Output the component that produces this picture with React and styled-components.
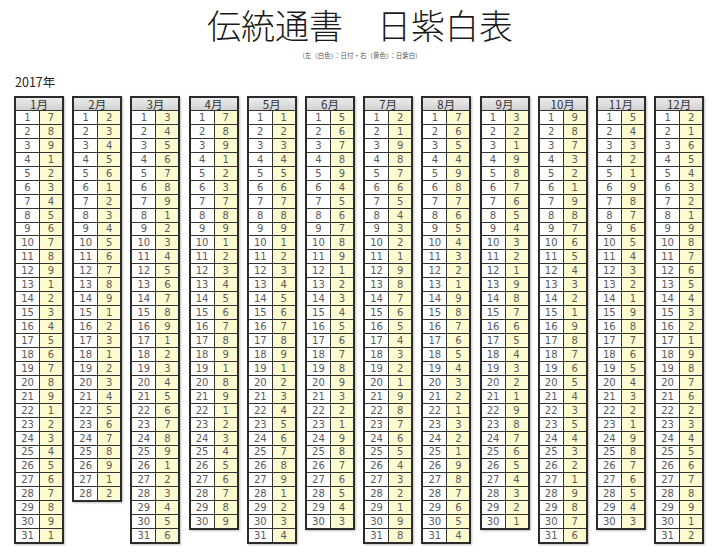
import styled, { createGlobalStyle } from "styled-components";

// 日紫白 (one digit per day), read from the 2017 sheet
const STARS = [
  "7891234567891234567891234567891",
  "2345612345678912312345678912",
  "3456789123456789123456789123456",
  "789123789123456789189123456789",
  "1234567891234567891234567891234",
  "567894567891234567893219876543",
  "2198765432198765432198765432198",
  "7654987654321987654321321987654",
  "321987654321987654321987654321",
  "9873219876543219876543543219876",
  "543219876543219876543219876543",
  "2165432198765432198762345678912",
];

const GlobalStyle = createGlobalStyle`
  body {
    margin: 0;
    background: #ffffff;
    font-family: "DejaVu Sans", Verdana, "Noto Sans CJK JP", sans-serif;
  }
`;

const Page = styled.div`
  width: 720px;
  height: 557px;
  overflow: hidden;
  display: flex;
  flex-direction: column;
`;

const Title = styled.h1`
  margin: 7px 0 0;
  text-align: center;
  font-family: "Noto Sans CJK JP", sans-serif;
  font-weight: 300;
  font-size: 34px;
  line-height: 36px;
  color: #1a1a1a;
`;

const Note = styled.div`
  text-align: center;
  font-family: "Noto Sans CJK JP", sans-serif;
  font-size: 6.5px;
  line-height: 9px;
  color: #555;
  margin-top: 8px;
`;

const YearLabel = styled.div`
  margin: 14px 0 0 15px;
  font-family: "Noto Sans CJK JP", sans-serif;
  font-size: 12.5px;
  line-height: 16px;
  color: #222;
`;

const Months = styled.div`
  display: flex;
  align-items: flex-start;
  gap: 8.2px;
  padding: 6px 0 0 14px;
`;

const MonthTable = styled.div`
  width: 50px;
  box-sizing: border-box;
  border: 2px solid #2b2b2b;
  background: #fff;
  box-shadow: 1px 1px 2px rgba(0, 0, 0, 0.25);
`;

const MonthHead = styled.div`
  height: 12px;
  line-height: 13px;
  border-bottom: 1px solid #333;
  background: linear-gradient(#ececec, #d2d2d2);
  text-align: center;
  font-family: "Noto Sans CJK JP", sans-serif;
  font-size: 11.5px;
  color: #333;
`;

const DayRow = styled.div`
  display: grid;
  grid-template-columns: 1fr 1fr;
  height: 12.95px;
  border-bottom: ${({ $last }) => ($last ? "none" : "1px solid #333")};
`;

const Cell = styled.div`
  display: flex;
  align-items: center;
  justify-content: center;
  font-size: 10px;
  color: #5a5a5a;
  background: ${({ $star }) => ($star ? "#fcfcd0" : "#ffffff")};
  border-left: ${({ $star }) => ($star ? "1px solid #333" : "none")};
`;

const Month = ({ index, stars }) => (
  <MonthTable>
    <MonthHead>{index + 1}月</MonthHead>
    {stars.split("").map((s, i) => (
      <DayRow key={i} $last={i === stars.length - 1}>
        <Cell>{i + 1}</Cell>
        <Cell $star>{s}</Cell>
      </DayRow>
    ))}
  </MonthTable>
);

const App = () => (
  <Page>
    <GlobalStyle />
    <Title>伝統通書　日紫白表</Title>
    <Note>(左（白色）：日付・右（黄色）：日紫白)</Note>
    <YearLabel>2017年</YearLabel>
    <Months>
      {STARS.map((stars, i) => (
        <Month key={i} index={i} stars={stars} />
      ))}
    </Months>
  </Page>
);

export default App;
